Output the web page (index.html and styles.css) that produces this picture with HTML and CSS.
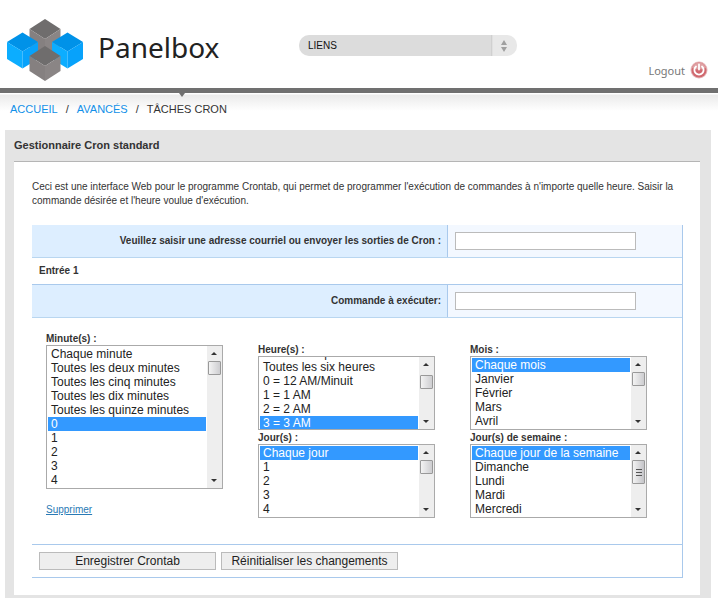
FILE: index.html
```html
<!DOCTYPE html>
<html lang="fr">
<head>
    <meta charset="UTF-8">
    <meta name="viewport" content="width=device-width, initial-scale=1.0">
    <title>Panelbox</title>
    <link rel="stylesheet" href="styles.css">
</head>
<body>
    <header class="header">
        <a href="#" class="logo">
            <svg class="logo-cubes" width="76" height="62" viewBox="0 0 76 62" aria-hidden="true">
                <path fill="#6f6d6d" d="M38 0l15.500 10l-15.500 10l-15.500-10z"/>
                <path fill="#858080" d="M22.500 10l15.500 10v18l-15.500-10z"/>
                <path fill="#8a8585" d="M53.500 10l-15.500 10v18l15.500-10z"/>
                <path fill="#0092e8" d="M15.500 13.500l15.500 9.500l-15.500 9.500l-15.500-9.500z"/>
                <path fill="#0cadff" d="M0 23l15.500 9.500v17l-15.500-9.500z"/>
                <path fill="#07a2fb" d="M31 23l-15.500 9.500v17l15.500-9.500z"/>
                <path fill="#0092e8" d="M60.500 13.500l15.500 9.500l-15.500 9.500l-15.500-9.500z"/>
                <path fill="#0cadff" d="M45 23l15.500 9.500v17l-15.500-9.500z"/>
                <path fill="#07a2fb" d="M76 23l-15.500 9.500v17l15.500-9.500z"/>
                <path fill="#6f6d6d" d="M38 27l15.500 10l-15.500 10l-15.500-10z"/>
                <path fill="#858080" d="M22.500 37l15.500 10v15l-15.500-10z"/>
                <path fill="#8a8585" d="M53.500 37l-15.500 10v15l15.500-10z"/>
            </svg>
            <span class="logo-text">Panelbox</span>
        </a>
        <select class="links" aria-label="Liens">
            <option>LIENS</option>
        </select>
        <a href="#" class="logout">
            <span>Logout</span>
            <svg width="18" height="18" viewBox="0 0 18 18" aria-hidden="true">
                <circle cx="9" cy="9" r="8.500" fill="#e6b5b7"/>
                <circle cx="9" cy="9" r="7.500" fill="#d0686e"/>
                <path d="M2 7a7.300 7.300 0 0 1 14 0q-7 3-14 0z" fill="#dfa0a3"/>
                <path d="M6 5.500a4.600 4.600 0 1 0 6 0M9 3.500v5" fill="none" stroke="#fff" stroke-width="1.800" stroke-linecap="round"/>
            </svg>
        </a>
    </header>

    <nav class="crumbs">
        <a href="#">ACCUEIL</a>
        <span>/</span>
        <a href="#">AVANCÉS</a>
        <span>/</span>
        <span class="current">TÂCHES CRON</span>
    </nav>

    <main class="panel">
        <h1>Gestionnaire Cron standard</h1>
        <div class="panel-body">
            <p>Ceci est une interface Web pour le programme Crontab, qui permet de programmer l'exécution de commandes à n'importe quelle heure. Saisir la commande désirée et l'heure voulue d'exécution.</p>

            <form class="cron">
                <div class="row field">
                    <label for="email">Veuillez saisir une adresse courriel ou envoyer les sorties de Cron :</label>
                    <div class="value"><input type="text" id="email"></div>
                </div>
                <div class="row entry">Entrée 1</div>
                <div class="row field">
                    <label for="command">Commande à exécuter:</label>
                    <div class="value"><input type="text" id="command"></div>
                </div>
                <div class="row times">
                    <div class="col col-minute">
                        <label for="minute">Minute(s) :</label>
                        <div class="listbox tall">
                            <select id="minute" size="10">
                                <option>Chaque minute</option>
                                <option>Toutes les deux minutes</option>
                                <option>Toutes les cinq minutes</option>
                                <option>Toutes les dix minutes</option>
                                <option>Toutes les quinze minutes</option>
                            </select>
                            <span class="bar"><span class="thumb"></span></span>
                        </div>
                        <a href="#" class="remove">Supprimer</a>
                    </div>
                    <div class="col">
                        <label for="hour">Heure(s) :</label>
                        <div class="listbox">
                            <select id="hour" size="5">
                                <option>Chaque heure</option>
                                <option>Toutes les deux heures</option>
                                <option>Toutes les quatre heures</option>
                                <option>Toutes les six heures</option>
                                <option>0 = 12 AM/Minuit</option>
                            </select>
                            <span class="bar"><span class="thumb"></span></span>
                        </div>
                        <label for="day">Jour(s) :</label>
                        <div class="listbox">
                            <select id="day" size="5">
                                <option selected>Chaque jour</option>
                            </select>
                            <span class="bar"><span class="thumb"></span></span>
                        </div>
                    </div>
                    <div class="col">
                        <label for="month">Mois :</label>
                        <div class="listbox">
                            <select id="month" size="5">
                                <option selected>Chaque mois</option>
                                <option>Janvier</option>
                                <option>Février</option>
                                <option>Mars</option>
                                <option>Avril</option>
                                <option>Mai</option>
                                <option>Juin</option>
                                <option>Juillet</option>
                                <option>Août</option>
                                <option>Septembre</option>
                                <option>Octobre</option>
                                <option>Novembre</option>
                                <option>Décembre</option>
                            </select>
                            <span class="bar"><span class="thumb"></span></span>
                        </div>
                        <label for="weekday">Jour(s) de semaine :</label>
                        <div class="listbox">
                            <select id="weekday" size="5">
                                <option selected>Chaque jour de la semaine</option>
                                <option>Dimanche</option>
                                <option>Lundi</option>
                                <option>Mardi</option>
                                <option>Mercredi</option>
                                <option>Jeudi</option>
                                <option>Vendredi</option>
                                <option>Samedi</option>
                            </select>
                            <span class="bar"><span class="thumb grip"></span></span>
                        </div>
                    </div>
                </div>
                <div class="row actions">
                    <button type="submit">Enregistrer Crontab</button>
                    <button type="reset">Réinitialiser les changements</button>
                </div>
            </form>
        </div>
    </main>

    <script src="script.js"></script>
</body>
</html>
```

FILE: styles.css
```css
* {
    box-sizing: border-box;
}
body {
    margin: 0;
    background: #fff;
    color: #333;
    font-family: "Liberation Sans", Arial, sans-serif;
    font-size: 10px;
}
.header {
    display: grid;
    grid-template-columns: 299px 218px 1fr;
    height: 93px;
    border-bottom: 5px solid #707070;
}
.logo {
    display: flex;
    align-items: flex-start;
    gap: 15px;
    padding: 19px 0 0 7px;
    color: #222;
    text-decoration: none;
}
.logo-text {
    padding-top: 8px;
    font-family: "Noto Sans", sans-serif;
    font-size: 28px;
    line-height: 40px;
}
.links {
    appearance: none;
    height: 21px;
    margin-top: 35px;
    padding: 0 36px 0 9px;
    border: 0;
    border-radius: 10px;
    color: #111;
    font: 10px "Liberation Sans", Arial, sans-serif;
    background:
        url("data:image/svg+xml,%3Csvg xmlns='http://www.w3.org/2000/svg' width='26' height='21'%3E%3Cpath d='M13 5l3 5h-6zM13 17l3-5h-6z' fill='%23a0a0a0'/%3E%3C/svg%3E") right center no-repeat,
        linear-gradient(to right, #c8c8c8, #e8e8e8 2px) right center / 26px 21px no-repeat,
        #dcdcdc;
}
.logout {
    display: flex;
    align-items: center;
    justify-content: flex-end;
    align-self: end;
    gap: 5px;
    padding: 0 10px 9px 0;
    color: #777;
    font-family: "Noto Sans", sans-serif;
    font-size: 11px;
    text-decoration: none;
}
.crumbs {
    position: relative;
    display: flex;
    gap: 8px;
    height: 37px;
    padding: 8px 10px 0;
    font-size: 11px;
    line-height: 16px;
    background: linear-gradient(#fff 1px, #ebebeb 2px, #fff 18px);
}
.crumbs::before {
    content: "";
    position: absolute;
    top: 0;
    left: 179px;
    border: solid transparent;
    border-width: 4px 3px 0;
    border-top-color: #707070;
}
.crumbs a {
    color: #1290e8;
    text-decoration: none;
}
.panel {
    margin: 0 7px 0 5px;
    padding: 0 11px 9px 9px;
    background: #e4e4e4;
}
h1 {
    margin: 0;
    font-size: 11px;
    line-height: 31px;
}
.panel-body {
    padding: 18px 17px 17px 18px;
    border-top: 1px solid #b5b5b5;
    background: #fff;
}
p {
    margin: 0 0 17px;
    line-height: 14px;
}
.cron {
    border-right: 1px solid #a9c9ec;
}
.row {
    border-bottom: 1px solid #a9c9ec;
}
.cron label,
.entry {
    font-weight: bold;
}
.field {
    display: grid;
    grid-template-columns: 1fr 235px;
    height: 33px;
    border-bottom: 2px solid #b9d6f0;
}
.field label {
    padding-right: 6px;
    background: #ddeeff;
    line-height: 32px;
    text-align: right;
}
.value {
    padding: 7px;
    border-left: 1px solid #a9c9ec;
    background: #f3f8ff;
}
.value input {
    display: block;
    width: 181px;
    height: 18px;
    border: 1px solid #bbb;
    background: #fff;
}
.entry {
    padding-left: 7px;
    line-height: 26px;
}
.times {
    display: grid;
    grid-template-columns: repeat(3, 212px);
    height: 227px;
    padding: 27px 0 0 14px;
}
.col-minute {
    margin-top: -11px;
}
.times label {
    display: block;
    height: 11px;
    line-height: 10px;
}
.listbox {
    position: relative;
    width: 177px;
    height: 74px;
    margin-bottom: 3px;
    border: 1px solid #aaa;
    background: #fff;
}
.tall {
    height: 144px;
}
.listbox select {
    display: block;
    width: 100%;
    height: 100%;
    padding: 0 15px 0 0;
    overflow-y: scroll;
    scrollbar-width: none;
    border: 0;
    border-radius: 0;
    outline: 0;
    background: #fff;
    color: #222;
    font: 12px "Liberation Sans", Arial, sans-serif;
}
.listbox option {
    min-height: 14px;
    height: 14px;
    margin: 0 1px;
    padding: 0 3px;
    line-height: 14px;
}
.listbox option:first-child {
    margin-top: 1px;
}
.listbox option:checked {
    background: #3399ff linear-gradient(#3399ff, #3399ff);
    color: #fff;
}
.bar {
    position: absolute;
    top: 0;
    right: 0;
    bottom: 0;
    width: 15px;
    background:
        url("data:image/svg+xml,%3Csvg xmlns='http://www.w3.org/2000/svg' width='15' height='15'%3E%3Cpath d='M4 9l3-3 3 3z' fill='%23333'/%3E%3C/svg%3E") top no-repeat,
        url("data:image/svg+xml,%3Csvg xmlns='http://www.w3.org/2000/svg' width='15' height='15'%3E%3Cpath d='M4 6l3 3 3-3z' fill='%23333'/%3E%3C/svg%3E") bottom no-repeat,
        #eee;
    pointer-events: none;
}
.thumb {
    position: absolute;
    top: 15px;
    left: 1px;
    width: 13px;
    height: 14px;
    border: 1px solid #999;
    border-radius: 1px;
    background: linear-gradient(to right, #f3f3f3, #cdcdd0);
}
.grip {
    height: 24px;
    background:
        url("data:image/svg+xml,%3Csvg xmlns='http://www.w3.org/2000/svg' width='6' height='7'%3E%3Cpath d='M0 .5h6M0 3.500h6M0 6.500h6' stroke='%23555'/%3E%3C/svg%3E") center no-repeat,
        linear-gradient(to right, #f3f3f3, #c4c4c8);
}
.remove {
    display: inline-block;
    margin-top: 12px;
    color: #2a7ab5;
    line-height: 12px;
}
.actions {
    display: flex;
    gap: 5px;
    padding: 7px;
}
.actions button {
    width: 177px;
    height: 18px;
    padding: 0;
    border: 1px solid #bbb;
    background: #eee;
    color: #222;
    font: 12px "Liberation Sans", Arial, sans-serif;
}
```

FILE: script.js
```js
const minute = document.getElementById('minute');
const hour = document.getElementById('hour');
const day = document.getElementById('day');

function addOption(select, text, selected) {
    select.add(new Option(text, text, selected, selected));
}

for (let i = 0; i < 60; i++) {
    addOption(minute, i, i === 0);
}
for (let i = 1; i < 24; i++) {
    const label = i < 12 ? i + ' AM' : i === 12 ? '12 PM/Midi' : (i - 12) + ' PM';
    addOption(hour, i + ' = ' + label, i === 3);
}
for (let i = 1; i < 32; i++) {
    addOption(day, i, false);
}

// move the thumb between the two 15px arrows
function moveThumb(select) {
    const bar = select.nextElementSibling;
    const thumb = bar.firstElementChild;
    const range = select.scrollHeight - select.clientHeight;
    const track = bar.clientHeight - 30 - thumb.offsetHeight;
    const ratio = range > 0 ? select.scrollTop / range : 0;
    thumb.style.top = Math.round(15 + track * ratio) + 'px';
}

window.addEventListener('load', () => {
    minute.scrollTop = 0;
    // selected hour on the last visible line
    hour.scrollTop = 40;
    document.querySelectorAll('.listbox select').forEach(select => {
        moveThumb(select);
        select.addEventListener('scroll', () => moveThumb(select));
    });
});
```
